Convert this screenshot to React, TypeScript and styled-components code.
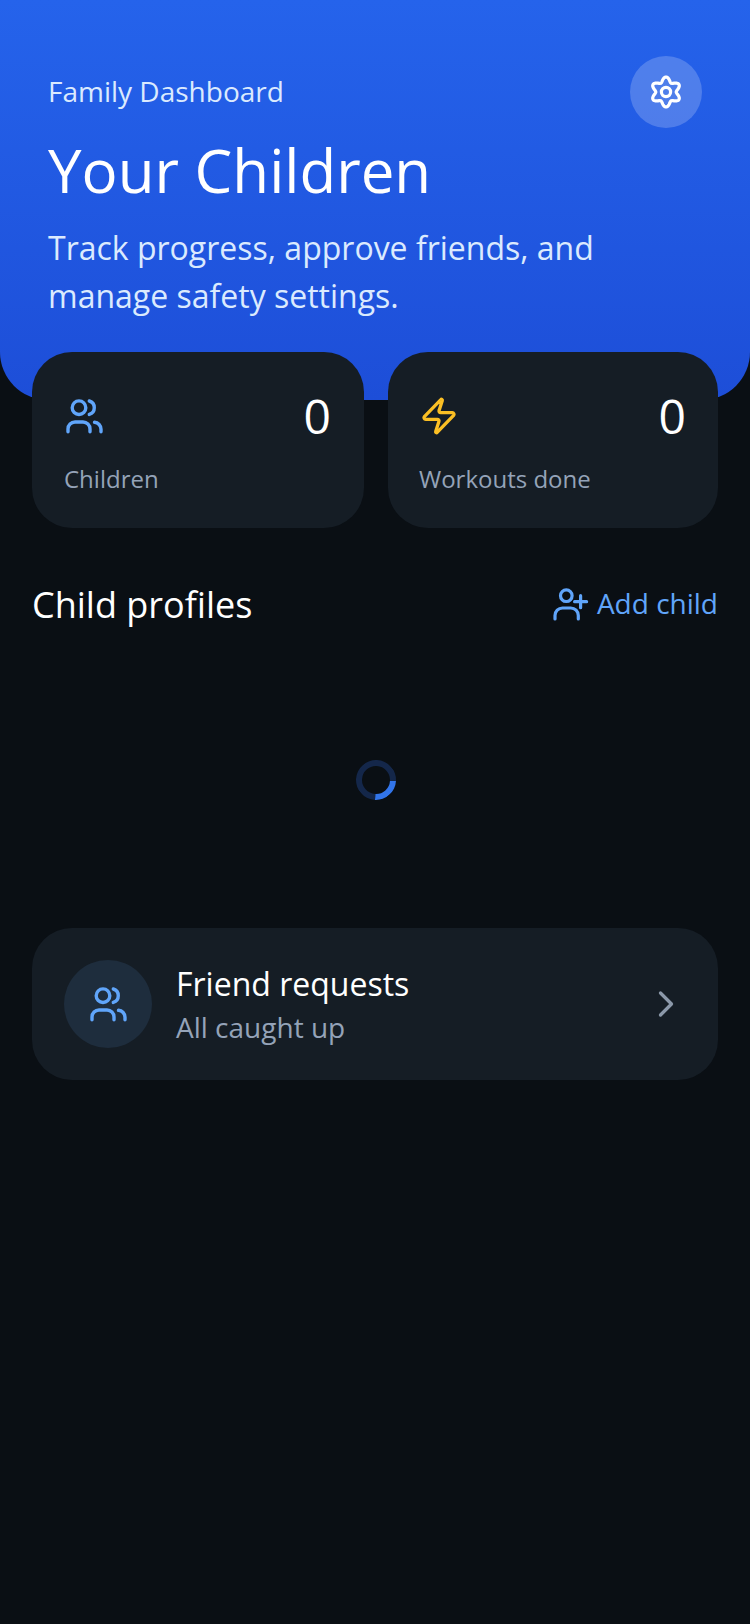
import React from 'react';
import styled, { createGlobalStyle } from 'styled-components';
import { ChevronRight, Zap } from 'lucide-react';

const GlobalStyle = createGlobalStyle`
  html, body {
    margin: 0;
    padding: 0;
    background: #0a0f14;
  }

  * {
    box-sizing: border-box;
  }
`;

const Page = styled.div`
  width: 750px;
  min-height: 1624px;
  background: #0a0f14;
  font-family: 'Open Sans', 'Noto Sans', sans-serif;
  color: #ffffff;
`;

const Hero = styled.header`
  height: 400px;
  padding: 56px 48px 0;
  background: linear-gradient(180deg, #2563eb 0%, #1d4ed8 100%);
  border-radius: 0 0 48px 48px;
`;

const HeroTop = styled.div`
  display: flex;
  justify-content: space-between;
  align-items: center;
`;

const Eyebrow = styled.p`
  margin: 0 0 2px;
  font-size: 28px;
  line-height: 36px;
  color: #dbeafe;
`;

const SettingsButton = styled.button`
  width: 72px;
  height: 72px;
  padding: 0;
  border: 0;
  border-radius: 50%;
  background: rgba(255, 255, 255, 0.2);
  color: #ffffff;
  display: flex;
  align-items: center;
  justify-content: center;
`;

const Title = styled.h1`
  margin: 6px 0 0;
  font-size: 60px;
  line-height: 72px;
  font-weight: 400;
`;

const Subtitle = styled.p`
  margin: 18px 0 0;
  font-size: 32px;
  line-height: 48px;
  color: #dbeafe;
`;

const Content = styled.main`
  padding: 0 32px;
`;

const Stats = styled.section`
  display: grid;
  grid-template-columns: 332px 330px;
  gap: 24px;
  margin-top: -48px;
`;

const StatCard = styled.div`
  height: 176px;
  padding: 36px 33px 0 32px;
  border-radius: 40px;
  background: #151d25;

  &:last-child {
    padding: 36px 32px 0 31px;
  }
`;

const StatTop = styled.div`
  display: flex;
  justify-content: space-between;
  align-items: center;
  height: 56px;
`;

const StatValue = styled.span`
  font-size: 48px;
  line-height: 56px;
`;

const StatLabel = styled.p`
  margin: 19px 0 0;
  font-size: 24px;
  line-height: 32px;
  color: #94a3b8;
`;

const SectionHeader = styled.div`
  display: flex;
  justify-content: space-between;
  align-items: center;
  margin-top: 52px;
  height: 48px;
`;

const SectionTitle = styled.h2`
  margin: 2px 0 0;
  font-size: 36px;
  line-height: 48px;
  font-weight: 400;
`;

const AddButton = styled.button`
  display: flex;
  align-items: center;
  gap: 8px;
  padding: 0 0 2px;
  border: 0;
  background: none;
  font: inherit;
  font-size: 28px;
  line-height: 36px;
  color: #60a5fa;
`;

const Loader = styled.div`
  height: 300px;
  padding: 4px 0 0 2px;
  display: flex;
  align-items: center;
  justify-content: center;
`;

const Spinner = styled.div`
  width: 40px;
  height: 40px;
  border-radius: 50%;
  border: 6px solid #14274a;
  border-top-color: #3275ea;
  transform: rotate(138deg);
`;

const RequestCard = styled.div`
  height: 152px;
  padding: 0 32px;
  display: flex;
  align-items: center;
  gap: 24px;
  border-radius: 40px;
  background: #151d25;
`;

const RequestIcon = styled.div`
  width: 88px;
  height: 88px;
  border-radius: 50%;
  background: #1e2d3d;
  display: flex;
  align-items: center;
  justify-content: center;
`;

const RequestText = styled.div`
  flex: 1;
  margin-top: 1px;
`;

const RequestTitle = styled.p`
  margin: 0;
  font-size: 32px;
  line-height: 44px;
`;

const RequestSub = styled.p`
  margin: 1px 0 0;
  font-size: 28px;
  line-height: 40px;
  color: #94a3b8;
`;

const Chevron = styled(ChevronRight)`
  margin-right: -2px;
  flex-shrink: 0;
`;

// six soft lobes, one pointing straight up
const gearPath = () => {
  const points: string[] = [];
  for (let i = 0; i < 120; i += 1) {
    const angle = (i / 120) * Math.PI * 2;
    const radius = 12.6 + 2.4 * Math.cos(6 * angle);
    const x = 20 + radius * Math.sin(angle);
    const y = 20 - radius * Math.cos(angle);
    points.push(`${x.toFixed(2)} ${y.toFixed(2)}`);
  }
  return `M${points.join('L')}Z`;
};

const GearIcon = () => (
  <svg width="40" height="40" viewBox="0 0 40 40" fill="none" stroke="currentColor" strokeWidth="3.2" strokeLinejoin="round">
    <path d={gearPath()} />
    <circle cx="20" cy="20" r="4.6" />
  </svg>
);

const PeopleIcon = () => (
  <svg width="40" height="40" viewBox="0 0 40 40" fill="none" stroke="#60a5fa" strokeWidth="3.4" strokeLinecap="round" strokeLinejoin="round">
    <circle cx="15" cy="11.7" r="6.8" />
    <path d="M25.3 5a7 7 0 0 1 0 13.4" />
    <path d="M4 35.7V33a7 7 0 0 1 7-7h8a7 7 0 0 1 7 7v2.7" />
    <path d="M30.5 26.3a7 7 0 0 1 6.5 7v2.4" />
  </svg>
);

const AddPersonIcon = () => (
  <svg width="36" height="36" viewBox="0 0 36 36" fill="none" stroke="currentColor" strokeWidth="3.2" strokeLinecap="round" strokeLinejoin="round">
    <circle cx="13.3" cy="10.7" r="5.8" />
    <path d="M2 34v-3.5a7.5 7.5 0 0 1 7.5-7.5h8.3a7.5 7.5 0 0 1 7.5 7.5V34" />
    <path d="M27.6 10.7v12M21.6 16.7h12" />
  </svg>
);

const App: React.FC = () => {
  return (
    <Page>
      <GlobalStyle />
      <Hero>
        <HeroTop>
          <Eyebrow>Family Dashboard</Eyebrow>
          <SettingsButton aria-label="Settings">
            <GearIcon />
          </SettingsButton>
        </HeroTop>
        <Title>Your Children</Title>
        <Subtitle>
          Track progress, approve friends, and
          <br />
          manage safety settings.
        </Subtitle>
      </Hero>
      <Content>
        <Stats>
          <StatCard>
            <StatTop>
              <PeopleIcon />
              <StatValue>0</StatValue>
            </StatTop>
            <StatLabel>Children</StatLabel>
          </StatCard>
          <StatCard>
            <StatTop>
              <Zap size={40} color="#fbbf24" />
              <StatValue>0</StatValue>
            </StatTop>
            <StatLabel>Workouts done</StatLabel>
          </StatCard>
        </Stats>
        <SectionHeader>
          <SectionTitle>Child profiles</SectionTitle>
          <AddButton>
            <AddPersonIcon />
            Add child
          </AddButton>
        </SectionHeader>
        <Loader>
          <Spinner />
        </Loader>
        <RequestCard>
          <RequestIcon>
            <PeopleIcon />
          </RequestIcon>
          <RequestText>
            <RequestTitle>Friend requests</RequestTitle>
            <RequestSub>All caught up</RequestSub>
          </RequestText>
          <Chevron size={44} color="#8b98a9" strokeWidth={1.8} />
        </RequestCard>
      </Content>
    </Page>
  );
};

export default App;
